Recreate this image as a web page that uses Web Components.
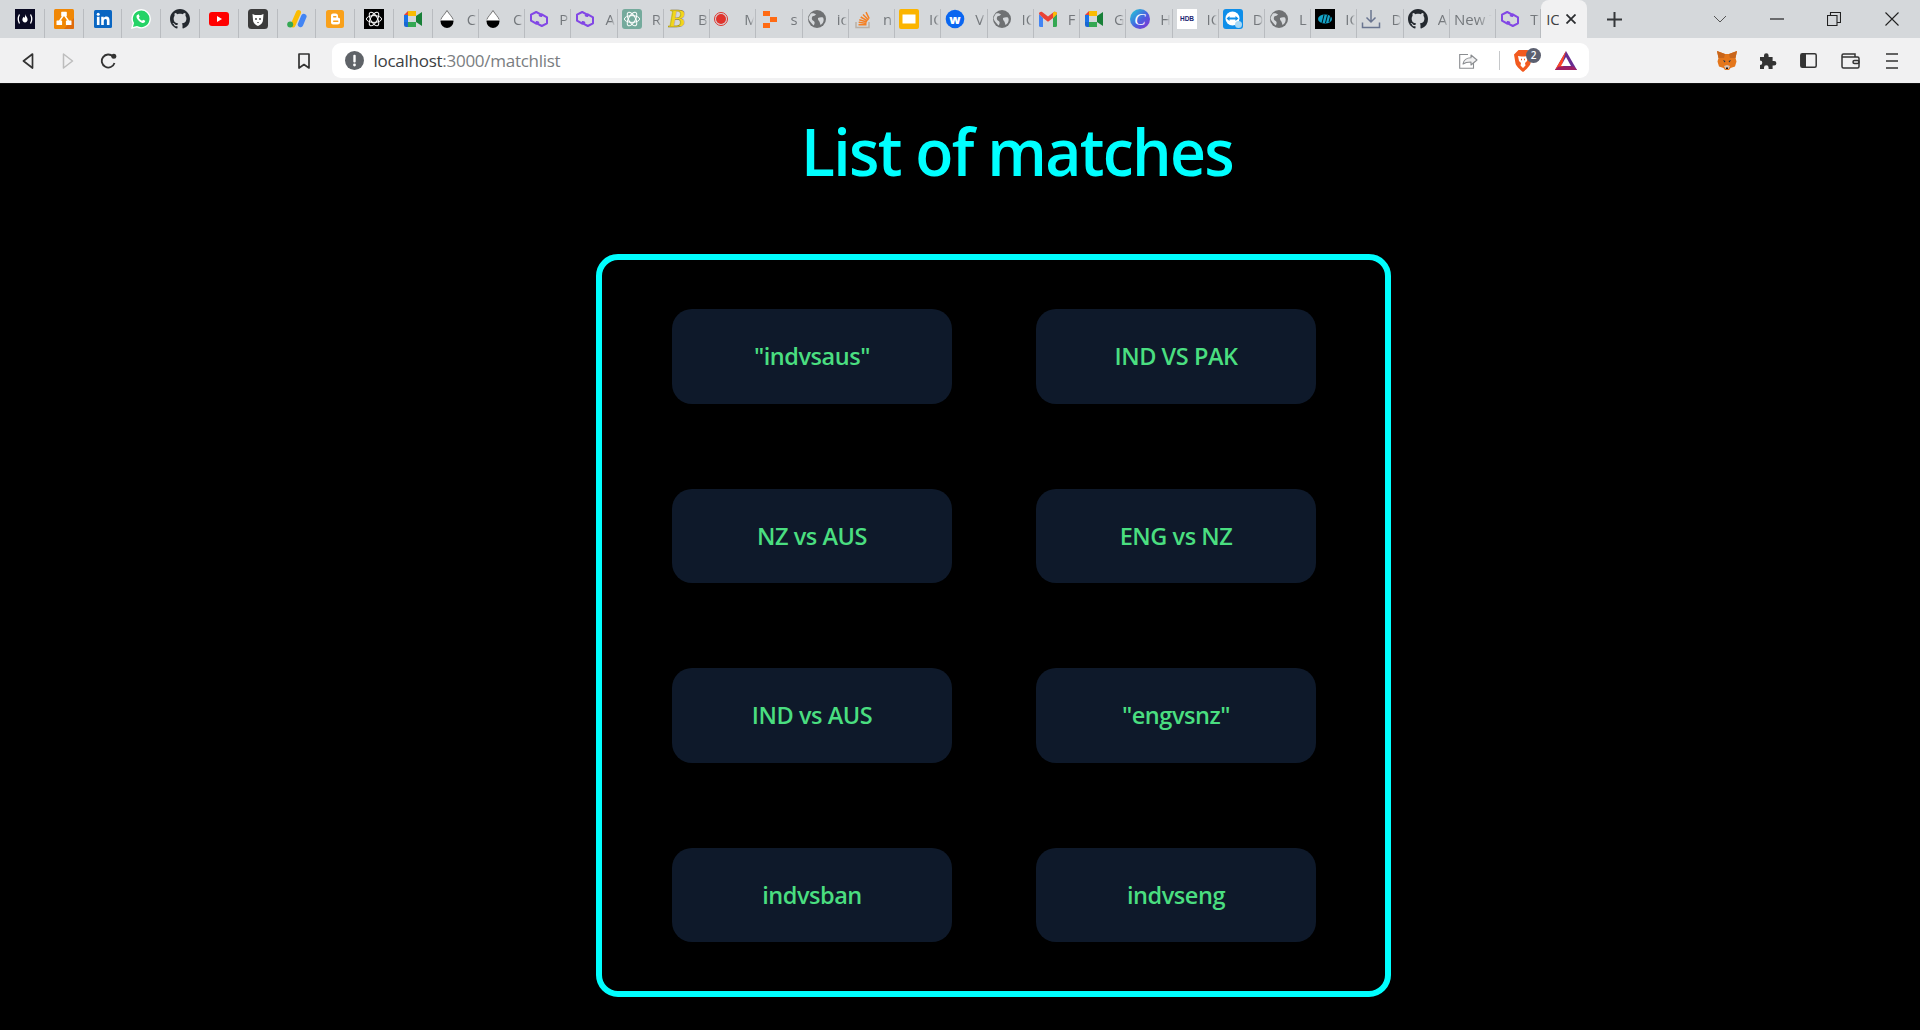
<!doctype html>
<html lang="en">
<head>
<meta charset="utf-8">
<title>localhost:3000/matchlist</title>
<style>
  html, body { margin: 0; height: 100%; background: #000; overflow: hidden; }
  body { font-family: "Open Sans", "Noto Sans", sans-serif; }
</style>
</head>
<body>
<browser-window>
  <tab-strip slot="tabs">
    <browser-tab pinned icon="fcc"></browser-tab>
    <browser-tab pinned icon="drawio"></browser-tab>
    <browser-tab pinned icon="linkedin"></browser-tab>
    <browser-tab pinned icon="whatsapp"></browser-tab>
    <browser-tab pinned icon="github"></browser-tab>
    <browser-tab pinned icon="youtube"></browser-tab>
    <browser-tab pinned icon="badge"></browser-tab>
    <browser-tab pinned icon="ads"></browser-tab>
    <browser-tab pinned icon="blogger"></browser-tab>
    <browser-tab pinned icon="openai"></browser-tab>
    <browser-tab pinned icon="meet"></browser-tab>
    <browser-tab icon="drop">C</browser-tab>
    <browser-tab icon="drop">C</browser-tab>
    <browser-tab icon="polygon">P</browser-tab>
    <browser-tab icon="polygon">A</browser-tab>
    <browser-tab icon="openaigreen">R</browser-tab>
    <browser-tab icon="scribble">B</browser-tab>
    <browser-tab icon="record">M</browser-tab>
    <browser-tab icon="blocks">s</browser-tab>
    <browser-tab icon="globe">ic</browser-tab>
    <browser-tab icon="stack">n</browser-tab>
    <browser-tab icon="slides">IC</browser-tab>
    <browser-tab icon="webflow">V</browser-tab>
    <browser-tab icon="globe">IC</browser-tab>
    <browser-tab icon="gmail">F</browser-tab>
    <browser-tab icon="meet">G</browser-tab>
    <browser-tab icon="canva">H</browser-tab>
    <browser-tab icon="hdb">IC</browser-tab>
    <browser-tab icon="teamviewer">D</browser-tab>
    <browser-tab icon="globe">L</browser-tab>
    <browser-tab icon="cricket">IC</browser-tab>
    <browser-tab icon="download">D</browser-tab>
    <browser-tab icon="github">A</browser-tab>
    <browser-tab>New T</browser-tab>
    <browser-tab icon="polygon" style="width:44.5px">T</browser-tab>
    <browser-tab active>IC</browser-tab>
  </tab-strip>
  <tool-bar slot="toolbar" url-host="localhost" url-path=":3000/matchlist"></tool-bar>
  <match-page>
    <match-card>"indvsaus"</match-card>
    <match-card>IND VS PAK</match-card>
    <match-card>NZ vs AUS</match-card>
    <match-card>ENG vs NZ</match-card>
    <match-card>IND vs AUS</match-card>
    <match-card>"engvsnz"</match-card>
    <match-card>indvsban</match-card>
    <match-card>indvseng</match-card>
  </match-page>
</browser-window>

<script>
// every icon is drawn on a 20x20 box
const KNOT = '<g fill="none" stroke="#fff" stroke-width="1"><ellipse cx="10" cy="10" rx="7.6" ry="3.4"/><ellipse cx="10" cy="10" rx="7.6" ry="3.4" transform="rotate(60 10 10)"/><ellipse cx="10" cy="10" rx="7.6" ry="3.4" transform="rotate(120 10 10)"/></g>';
const GITHUB = 'M8 0C3.58 0 0 3.58 0 8c0 3.54 2.29 6.53 5.47 7.59.4.07.55-.17.55-.38 0-.19-.01-.82-.01-1.49-2.01.37-2.53-.49-2.69-.94-.09-.23-.48-.94-.82-1.13-.28-.15-.68-.52-.01-.53.63-.01 1.08.58 1.23.82.72 1.21 1.87.87 2.33.66.07-.52.28-.87.51-1.07-1.78-.2-3.64-.89-3.64-3.95 0-.87.31-1.59.82-2.15-.08-.2-.36-1.02.08-2.12 0 0 .67-.21 2.2.82.64-.18 1.32-.27 2-.27.68 0 1.36.09 2 .27 1.53-1.04 2.2-.82 2.2-.82.44 1.1.16 1.92.08 2.12.51.56.82 1.27.82 2.15 0 3.07-1.87 3.75-3.65 3.95.29.25.54.73.54 1.48 0 1.07-.01 1.93-.01 2.2 0 .21.15.46.55.38A8.013 8.013 0 0016 8c0-4.42-3.58-8-8-8z';
const MEET = '<path d="M1 6l4-4h8v5H5v6H1z" fill="#ea4335"/><path d="M5 2h8v5H5z" fill="#fbbc04"/><path d="M1 6h4v7H1z" fill="#1a73e8"/><path d="M1 13h4v5H3a2 2 0 0 1-2-2z" fill="#1967d2"/><path d="M5 13h8v5H5z" fill="#34a853"/><path d="M13 7l6-4v14l-6-4z" fill="#188038"/><rect x="5" y="7" width="8" height="6" fill="#d5d8db"/>';
const ICONS = {
  fcc: '<rect width="20" height="20" fill="#0a0a23"/><path d="M4.5 5.5Q2 10 4.5 14.5M15.5 5.5Q18 10 15.5 14.5" fill="none" stroke="#fff" stroke-width="1.3"/><path d="M10 5c.6 2 2.6 3.2 2.6 5.5 0 1.700-1 2.800-2.600 3-1.600-.2-2.600-1.300-2.600-3 0-1.300.7-2 1.300-2.800.2.600.4 1 .8 1C10.200 7.700 10.300 6.300 10 5z" fill="#fff"/>',
  drawio: '<rect width="20" height="20" rx="1.5" fill="#f08705"/><path d="M20 9v9.500a1.500 1.500 0 0 1-1.500 1.500H10z" fill="#df6c0c"/><g fill="#fff"><rect x="7.2" y="2.8" width="5.6" height="4.6" rx=".6"/><rect x="2.5" y="11.5" width="5.6" height="4.6" rx=".6"/><rect x="11.9" y="11.5" width="5.6" height="4.6" rx=".6"/></g><path d="M9 7L5.500 12M11 7l3.500 5" stroke="#fff" stroke-width="1.4"/>',
  linkedin: '<rect x="1" y="1" width="18" height="18" rx="1.5" fill="#0a66c2"/><g fill="#fff"><circle cx="5.2" cy="5.3" r="1.5"/><rect x="3.9" y="7.8" width="2.6" height="8.2"/><path d="M8.200 7.800h2.500V9c.5-.8 1.500-1.400 2.700-1.400 2.300 0 3.100 1.500 3.100 3.700V16h-2.600v-4.200c0-1.100-.3-1.900-1.300-1.900-1.100 0-1.800.8-1.800 2V16H8.200z"/></g>',
  whatsapp: '<path d="M1 19l1.300-4.800A9 9 0 1 1 5.800 17.700z" fill="#25d366" stroke="#fff" stroke-width="1.4"/><path d="M7.300 5.500c-.4 0-1 .2-1.400.8-.5.700-.6 1.900.1 3.100 1 1.900 2.800 3.600 4.800 4.300 1.300.4 2.300.1 2.900-.5.4-.4.6-1 .5-1.500l-2.100-1-1 1.100c-1.400-.5-2.600-1.700-3.200-3l.8-1-.8-2.100c-.1-.2-.3-.7-.6-.7z" fill="#fff"/>',
  github: `<svg viewBox="0 0 16 16"><path d="${GITHUB}" fill="#24292f"/></svg>`,
  youtube: '<rect x="0" y="3" width="20" height="14" rx="3" fill="#f00"/><path d="M8 7l5 3-5 3z" fill="#fff"/>',
  badge: '<rect width="20" height="20" rx="3.5" fill="#3b3b3b"/><path d="M4.500 5l2.500 1h6l2.500-1-.5 6c0 2.800-2.400 5-5 6-2.600-1-5-3.200-5-6z" fill="#fff"/><circle cx="8" cy="10" r=".9" fill="#333"/><circle cx="12" cy="10" r=".9" fill="#333"/><path d="M9 13h2l-1 1.200z" fill="#333"/>',
  ads: '<path d="M6 16L11.500 3.500" stroke="#fbbc04" stroke-width="5" stroke-linecap="round"/><path d="M16.800 7.500L13.500 15.500" stroke="#4285f4" stroke-width="5.5" stroke-linecap="round"/><circle cx="3.2" cy="15.5" r="3" fill="#34a853"/>',
  blogger: '<rect x="1" y="1" width="18" height="18" rx="2.5" fill="#f9a11b"/><path d="M6 6.500a2 2 0 0 1 2-2h2.500a2.500 2.500 0 0 1 2.500 2.500v1a1 1 0 0 0 1 1 1 1 0 0 1 1 1V13a2.500 2.500 0 0 1-2.500 2.500H8A2 2 0 0 1 6 13.500z" fill="#fff"/><rect x="8" y="7" width="3.5" height="1.4" rx=".7" fill="#f9a11b"/><rect x="8" y="11.5" width="5.5" height="1.4" rx=".7" fill="#f9a11b"/>',
  openai: `<rect width="20" height="20" fill="#000"/>${KNOT}`,
  openaigreen: `<rect width="20" height="20" rx="3" fill="#74aa9c"/>${KNOT}`,
  meet: MEET,
  drop: '<path d="M10 1.500C8 5 3.500 8.500 3.500 12.500a6.500 6.500 0 0 0 13 0C16.500 8.500 12 5 10 1.500z" fill="#fff"/><path d="M3.500 11.500h13v1a6.500 6.500 0 0 1-13 0z" fill="#000"/><path d="M10 1.500C8 5 4.600 8 3.900 10.500" fill="none" stroke="#555" stroke-width=".8"/><path d="M10 1.500c2 3.500 5.400 6.500 6.100 9" fill="none" stroke="#555" stroke-width=".8"/>',
  polygon: '<g fill="none" stroke="#8247e5" stroke-width="2" stroke-linejoin="round"><path d="M12.200 8V5.700L7.200 3 2 5.700v6l5.200 3 2.800-1.600"/><path d="M7.800 12v2.300l5 2.700 5.200-2.700v-6L12.800 5.300 10 6.900"/></g>',
  scribble: '<text x="0" y="18" font-family="Liberation Serif" font-style="italic" font-weight="700" font-size="26" fill="#f2d61c" stroke="#7a6a10" stroke-width=".3">B</text>',
  record: '<circle cx="7" cy="10" r="6.500" fill="none" stroke="#e0332c" stroke-width="1"/><circle cx="7" cy="10" r="5" fill="#e0332c"/>',
  blocks: '<g fill="#ff6a13"><rect x="3" y="2" width="7" height="5"/><rect x="10" y="8" width="7" height="5"/><rect x="3" y="14" width="7" height="5"/></g>',
  globe: '<circle cx="10" cy="10" r="9" fill="#6f7173"/><path d="M4 4.500c2-.8 4 0 5 1-1 .5-1 1.500-2.500 1.500S4.500 9 5 10.500c.5 1.200 2 1 2.500 2.500.3 1 0 2.500-1 3.500C4.500 14 2 12 1.500 9.500 2 7.500 3 5.500 4 4.500zM11 9c1.500-.8 3.500-1 5-.5 1 1.500.8 3.500 0 5-.5.800-1.500 2-2.500 2.500-.5-1-.5-2.200-1-3.200C12 12 10.500 10.500 11 9z" fill="#d5d8db"/>',
  stack: '<path d="M3 13v5.500h13V13" fill="none" stroke="#b9b0a6" stroke-width="1.5"/><path d="M5.500 15.700h8M5.700 13.300l7.800 1.200M6.300 10.700l7.500 2.300M7.700 8l6.800 3.800M10 5.500l5.500 5.500M13 3.200l3.200 6.500" stroke="#f48024" stroke-width="1.5"/>',
  slides: '<rect width="20" height="20" rx="2" fill="#fbb400"/><rect x="3.5" y="5.5" width="13" height="9" fill="#fff"/>',
  webflow: '<circle cx="10" cy="10" r="9.3" fill="#0a66f0"/><text x="10" y="14.5" text-anchor="middle" font-family="Open Sans" font-weight="800" font-size="12.5" fill="#fff">w</text>',
  gmail: '<path d="M1 5v11.500A1.500 1.500 0 0 0 2.500 18H5V9z" fill="#4285f4"/><path d="M15 9v9h2.500a1.500 1.500 0 0 0 1.500-1.500V5z" fill="#34a853"/><path d="M1 5c0-2 2-2.800 3.500-1.700L10 7.500l5.500-4.200C17 2.200 19 3 19 5l-4 4-5 3.800L5 9z" fill="#ea4335"/><path d="M15 3.600l.5-.3C17 2.200 19 3 19 5l-4 4z" fill="#fbbc04"/>',
  canva: '<defs><linearGradient id="cv" x1="0" y1="0" x2="1" y2="1"><stop offset="0" stop-color="#1fd3d6"/><stop offset=".55" stop-color="#4a5fe0"/><stop offset="1" stop-color="#8a2fd0"/></linearGradient></defs><circle cx="10" cy="10" r="10" fill="url(#cv)"/><text x="10" y="15.5" text-anchor="middle" font-family="Liberation Serif" font-style="italic" font-size="17" fill="#fff">C</text>',
  hdb: '<rect width="20" height="20" fill="#fff"/><text x="10" y="12" text-anchor="middle" font-family="Liberation Sans" font-weight="700" font-size="6.5" fill="#1a2470">HDB</text>',
  teamviewer: '<rect width="20" height="20" rx="3" fill="#0e8ee9"/><circle cx="9.5" cy="9.5" r="7" fill="#fff"/><path d="M3.500 9.500l3-2.500v1.500h6V7l3 2.500-3 2.500v-1.500h-6V12z" fill="#0e8ee9"/><circle cx="15.5" cy="15.5" r="3.5" fill="#a8d8f5"/>',
  cricket: '<rect width="20" height="20" fill="#000"/><ellipse cx="10" cy="10" rx="7" ry="4.5" fill="#14a3c7"/><path d="M7 14l2-8M10.500 14l2-8M14 13l1.500-6" stroke="#000" stroke-width=".9"/>',
  download: '<path d="M10 1v12M5.500 8.500L10 13l4.500-4.500M1.500 13.500v5h17v-5" fill="none" stroke="#6a7590" stroke-width="1.5"/>'
};

function iconSvg(name) {
  const body = ICONS[name] || '';
  if (body.startsWith('<svg')) return body.replace('<svg', '<svg width="20" height="20"');
  return `<svg width="20" height="20" viewBox="0 0 20 20">${body}</svg>`;
}

class BrowserWindow extends HTMLElement {
  constructor() {
    super();
    this.attachShadow({ mode: "open" });
    this.shadowRoot.innerHTML = `
      <style>
        :host { display: flex; flex-direction: column; height: 100vh; background: #000; }
        main { flex: 1; min-height: 0; }
      </style>
      <slot name="tabs"></slot>
      <slot name="toolbar"></slot>
      <main><slot></slot></main>`;
  }
}

class TabStrip extends HTMLElement {
  constructor() {
    super();
    this.attachShadow({ mode: "open" });
    this.shadowRoot.innerHTML = `
      <style>
        :host { display: flex; height: 38px; background: #d5d8db; padding-left: 6px; flex: none; }
        .plus { margin-left: 14px; width: 28px; display: flex; align-items: center; justify-content: center; }
        .controls { display: flex; margin-left: 84px; align-items: center; }
        .ctl { display: flex; width: 14px; justify-content: center; }
      </style>
      <slot></slot>
      <div class="plus">
        <svg width="15" height="15" viewBox="0 0 15 15"><path d="M7.500 0v15M0 7.500h15" stroke="#35373a" stroke-width="2"/></svg>
      </div>
      <div class="controls">
        <span class="ctl"><svg width="14" height="8" viewBox="0 0 14 8"><path d="M1 1l6 6 6-6" fill="none" stroke="#555" stroke-width="1"/></svg></span>
        <span class="ctl" style="margin-left:43px"><svg width="14" height="2" viewBox="0 0 14 2"><path d="M0 1h14" stroke="#222" stroke-width="1.2"/></svg></span>
        <span class="ctl" style="margin-left:43px"><svg width="14" height="14" viewBox="0 0 14 14"><path d="M.5 3.500h9.500v10H.5zM3.500 3.500V.5h10v10H10" fill="none" stroke="#222" stroke-width="1.1"/></svg></span>
        <span class="ctl" style="margin-left:44px"><svg width="14" height="14" viewBox="0 0 14 14"><path d="M.5.500l13 13M13.500.500l-13 13" stroke="#222" stroke-width="1.1"/></svg></span>
      </div>`;
  }
}

class BrowserTab extends HTMLElement {
  connectedCallback() {
    if (this.shadowRoot) return;
    this.attachShadow({ mode: "open" });
    const icon = this.getAttribute("icon");
    const active = this.hasAttribute("active");
    this.shadowRoot.innerHTML = `
      <style>
        :host { display: flex; align-items: center; box-sizing: border-box; width: 46.24px; height: 38px;
          position: relative; flex: none; padding-left: 4px; font-size: 15px; color: #74787c; }
        :host([pinned]) { width: 38.8px; padding-left: 9px; }
        :host::after { content: ""; width: 1px; position: absolute; right: 0; top: 9px; bottom: 0; background: #b9bcc0; }
        :host([active]) { width: 46px; background: #f1f1f2; border-radius: 8px 8px 0 0; color: #3c4043; padding-left: 5.5px; }
        :host([active])::after { display: none; }
        .ic { width: 20px; height: 20px; flex: none; margin-right: 10px; margin-top: -1px; }
        .ic:empty { display: none; }
        .label { flex: none; width: 10px; overflow: hidden; white-space: nowrap; margin-top: -1px;
          -webkit-mask-image: linear-gradient(90deg, #000 60%, transparent); mask-image: linear-gradient(90deg, #000 60%, transparent); }
        :host([no-icon]) .label { width: 38px; }
        :host([active]) .label { width: 13px; -webkit-mask-image: none; mask-image: none; }
        .x { margin-left: 7px; display: flex; }
      </style>
      <span class="ic">${icon ? iconSvg(icon) : ""}</span>
      <span class="label"><slot></slot></span>
      ${active ? '<span class="x"><svg width="10" height="10" viewBox="0 0 10 10"><path d="M.5.500l9 9M9.500.500l-9 9" stroke="#2b2d30" stroke-width="1.8"/></svg></span>' : ""}`;
    if (!icon) this.setAttribute("no-icon", "");
  }
}

class ToolBar extends HTMLElement {
  connectedCallback() {
    if (this.shadowRoot) return;
    this.attachShadow({ mode: "open" });
    this.shadowRoot.innerHTML = `
      <style>
        :host { display: flex; align-items: center; height: 45px; background: #f1f1f2; flex: none;
          padding-left: 8px; border-bottom: 1px solid #111; box-sizing: content-box; }
        .btn { width: 40px; height: 24px; display: flex; align-items: center; justify-content: center; flex: none; }
        .ext { width: 41.5px; }
        .omni { width: 1257.5px; height: 35px; margin: 0 118px 0 7.5px; background: #fff; border-radius: 9px;
          display: flex; align-items: center; padding-left: 13px; box-sizing: border-box; flex: none; }
        .url { font-size: 17px; margin-left: 10px; letter-spacing: -.27px; color: #7a7d81; white-space: nowrap; }
        .url b { font-weight: 400; color: #3c4043; }
        .end { margin-left: auto; display: flex; align-items: center; padding-right: 12px; }
        .sep { width: 1px; height: 19px; background: #c6c8ca; margin: 0 14px 0 21px; }
        .lion { position: relative; width: 18px; height: 22px; margin-right: 23px; }
        .count { position: absolute; left: 12px; top: -2px; width: 15px; height: 15px; border-radius: 50%;
          background: #5c6070; color: #fff; font: 600 10px/15px "Open Sans", sans-serif; text-align: center; }
      </style>
      <span class="btn"><svg width="12" height="16" viewBox="0 0 12 16"><path d="M10.500 1L1.500 8l9 7z" fill="none" stroke="#333" stroke-width="1.7" stroke-linejoin="round"/></svg></span>
      <span class="btn"><svg width="12" height="16" viewBox="0 0 12 16"><path d="M1.500 1l9 7-9 7z" fill="none" stroke="#bdbdbd" stroke-width="1.5" stroke-linejoin="round"/></svg></span>
      <span class="btn"><svg width="17" height="17" viewBox="0 0 17 17"><path d="M14.500 11a6.500 6.500 0 1 1-1.500-6.500" fill="none" stroke="#333" stroke-width="1.8"/><circle cx="13.8" cy="4.3" r="2.5" fill="#333"/></svg></span>
      <span class="btn" style="margin-left:156px"><svg width="12" height="16" viewBox="0 0 12 16"><path d="M1 1h10v14l-5-3.500L1 15z" fill="none" stroke="#333" stroke-width="1.7" stroke-linejoin="round"/></svg></span>
      <div class="omni">
        <svg width="19" height="19" viewBox="0 0 19 19"><circle cx="9.5" cy="9.5" r="9.5" fill="#5f6368"/><rect x="8.3" y="3.8" width="2.4" height="7.6" rx="1" fill="#fff"/><circle cx="9.5" cy="14" r="1.4" fill="#fff"/></svg>
        <span class="url"><b>${this.getAttribute("url-host")}</b>${this.getAttribute("url-path")}</span>
        <div class="end">
          <svg width="19" height="17" viewBox="0 0 19 17"><path d="M9 2.500H.7v13.800h13.800V11" fill="none" stroke="#8a8d90" stroke-width="1.1"/><path d="M4 12c.5-4 4-6.200 8-6.200V3l6 5-6 5v-3C9 10 6 10.500 4 12z" fill="#f1f1f2" stroke="#8a8d90" stroke-width="1.1" stroke-linejoin="round"/></svg>
          <span class="sep"></span>
          <span class="lion">
            <svg width="18" height="22" viewBox="0 0 18 22"><path d="M4.500 0h9L18 4.500l-1.500 9c-.4 2.500-5 6.500-7.500 8.500-2.500-2-7.100-6-7.500-8.500L0 4.500z" fill="#f25a1f"/><path d="M4 6l3.500.5h3L14 6l-1 5-2 2 .5 2.500L9 18l-2.500-2.500L7 13l-2-2z" fill="#fff"/><path d="M7 9.500h1M10 9.500h1" stroke="#f25a1f" stroke-width="1.3"/></svg>
            <span class="count">2</span>
          </span>
          <svg width="22" height="19" viewBox="0 0 22 19"><path d="M11 0l11 19H0z" fill="#662d91"/><path d="M11 0L0 19h11L7 14z" fill="#ff4724"/><path d="M0 19l3.500-3.500h15L22 19z" fill="#9e1f63"/><path d="M11 6l5 9H6z" fill="#fff"/></svg>
        </div>
      </div>
      <span class="btn ext" style="width:40px"><svg width="20" height="19" viewBox="0 0 20 19"><path d="M0 0l8 3h4l8-3-1.500 7 1 3.500-1.500 5-4.500 1.500-1.500 2h-4l-1.500-2L2 15.500l-1.500-5 1-3.500z" fill="#e4761b"/><path d="M6 9l2.500 1-1 1.500zM14 9l-2.500 1 1 1.500z" fill="#233447"/><path d="M7 15l3-1 3 1-1.500 3h-3z" fill="#d7c1b3"/><path d="M9 16.500h2v1.500H9z" fill="#161616"/><path d="M0 0l8 3-1 4-5.500 0zM20 0l-8 3 1 4 5.500 0z" fill="#c8651b"/></svg></span>
      <span class="btn ext"><svg width="18" height="17" viewBox="0 0 18 17"><path d="M1 5h4V3.500a2.300 2.300 0 0 1 4.600 0V5h4v4h1.500a2.300 2.300 0 0 1 0 4.600h-1.500V17H9.600v-1.500a2.300 2.300 0 0 0-4.600 0V17H1v-4a2.300 2.300 0 0 0 0-4.600z" fill="#333"/></svg></span>
      <span class="btn ext" style="width:40px"><svg width="17" height="15" viewBox="0 0 17 15"><rect x=".8" y=".8" width="15.4" height="13.4" rx="1.5" fill="none" stroke="#333" stroke-width="1.5"/><rect x="1" y="1" width="5" height="13" fill="#333"/></svg></span>
      <span class="btn ext" style="width:43px"><svg width="19" height="16" viewBox="0 0 19 16"><path d="M1 4V2.500A1.500 1.500 0 0 1 2.500 1H14v3M1 4h15.500A1.500 1.500 0 0 1 18 5.500v8a1.500 1.500 0 0 1-1.500 1.500h-14A1.500 1.500 0 0 1 1 13.500z" fill="none" stroke="#333" stroke-width="1.5"/><rect x="12" y="7.5" width="6" height="3" rx="1.5" fill="none" stroke="#333" stroke-width="1.5"/></svg></span>
      <span class="btn ext"><svg width="12" height="16" viewBox="0 0 12 16"><path d="M0 1h12M0 8h12M0 15h12" stroke="#333" stroke-width="1.7"/></svg></span>`;
  }
}

class MatchPage extends HTMLElement {
  constructor() {
    super();
    this.attachShadow({ mode: "open" });
    this.shadowRoot.innerHTML = `
      <style>
        :host { display: flex; flex-direction: column; align-items: center; padding-left: 67px; }
        h1 { margin: 26px 0 0 47px; font-size: 66px; line-height: 80px; font-weight: 600; color: #00ffff;
          letter-spacing: -1.8px; transform: scaleX(.947); font-family: "Open Sans", "Noto Sans", sans-serif; }
        .list { display: grid; grid-template-columns: 280px 280px; column-gap: 84px; row-gap: 85px; box-sizing: border-box;
          width: 795px; margin-top: 64px; padding: 49px 69px 49px 70px; border: 6px solid #00ffff; border-radius: 22px; }
      </style>
      <h1>List of matches</h1>
      <section class="list"><slot></slot></section>`;
  }
}

class MatchCard extends HTMLElement {
  constructor() {
    super();
    this.attachShadow({ mode: "open" });
    this.shadowRoot.innerHTML = `
      <style>
        :host { display: flex; align-items: center; justify-content: center; height: 94.5px; background: #0e192a;
          border-radius: 20px; color: #4ade80; font-size: 23.5px; font-weight: 600; letter-spacing: -.45px;
          font-family: "Open Sans", "Noto Sans", sans-serif; }
      </style>
      <slot></slot>`;
  }
}

customElements.define("browser-window", BrowserWindow);
customElements.define("tab-strip", TabStrip);
customElements.define("browser-tab", BrowserTab);
customElements.define("tool-bar", ToolBar);
customElements.define("match-page", MatchPage);
customElements.define("match-card", MatchCard);
</script>
</body>
</html>
